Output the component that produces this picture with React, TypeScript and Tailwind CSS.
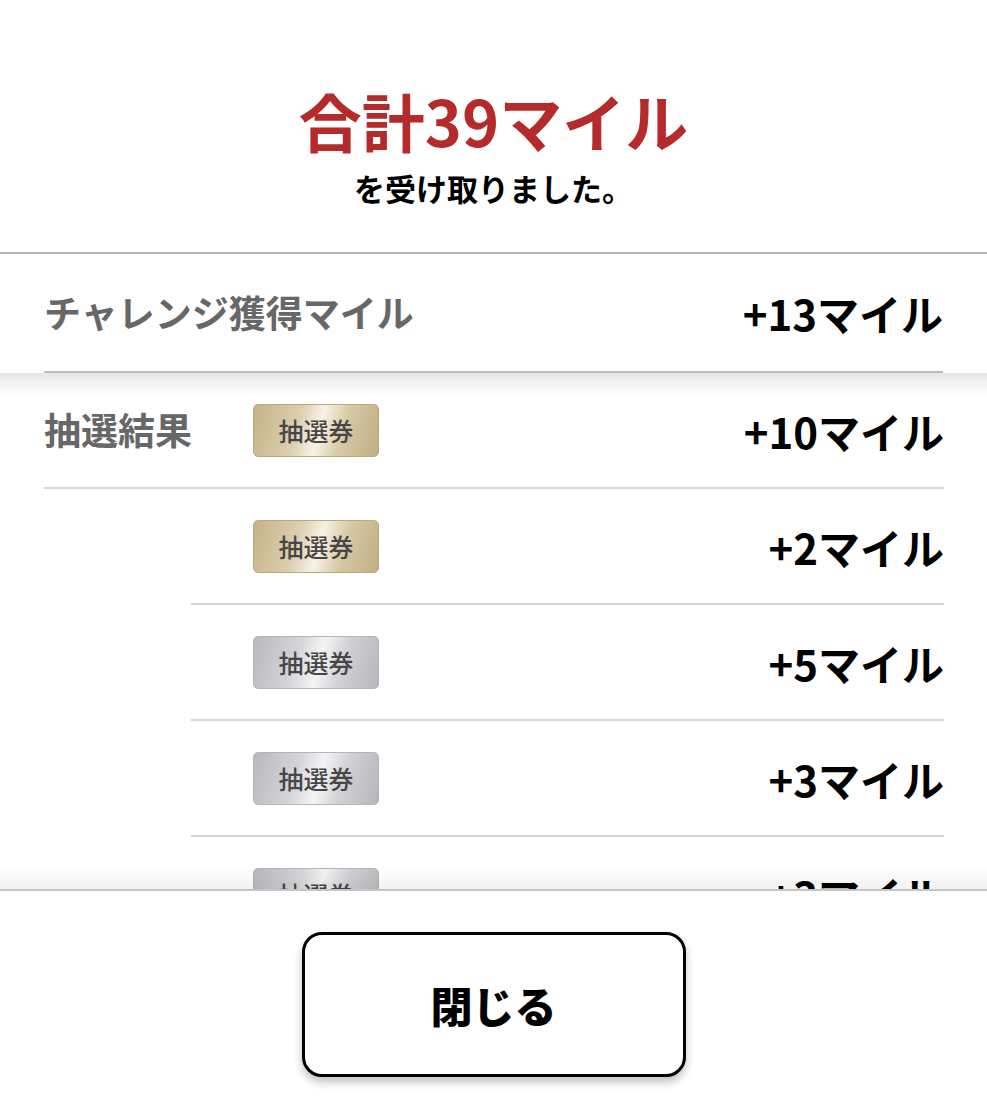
import React from "react";

const font = "font-['Noto_Sans_CJK_JP','Noto_Sans',sans-serif]";

type Item = { label?: string; tier: "gold" | "silver"; miles: number };

const items: Item[] = [
  { label: "抽選結果", tier: "gold", miles: 10 },
  { tier: "gold", miles: 2 },
  { tier: "silver", miles: 5 },
  { tier: "silver", miles: 3 },
  { tier: "silver", miles: 3 },
];

const Ticket = ({ tier }: { tier: "gold" | "silver" }) => (
  <div
    className={
      tier === "gold"
        ? "w-[126px] h-[53px] rounded-[5px] border border-[#bba97c] flex items-center justify-center bg-[linear-gradient(105deg,#c5b387_0%,#dccfb0_35%,#f7f2e6_52%,#d8caa6_70%,#c1ae82_100%)]"
        : "w-[126px] h-[53px] rounded-[5px] border border-[#b4b4b9] flex items-center justify-center bg-[linear-gradient(105deg,#b8b8bd_0%,#d6d6da_35%,#f4f4f6_52%,#d2d2d6_70%,#b6b6bb_100%)]"
    }
  >
    <span className="text-[25px] font-medium text-[#464646] leading-none">抽選券</span>
  </div>
);

export default function App() {
  return (
    <div className={`w-[987px] h-[1105px] bg-white flex flex-col ${font}`}>
      <header className="h-[252px] flex flex-col items-center pt-[88px]">
        <h1 className="text-[63px] font-bold text-[#b52b2b] leading-none">合計39マイル</h1>
        <p className="mt-[21px] text-[31px] font-bold text-black leading-none">を受け取りました。</p>
      </header>
      <div className="h-[2px] bg-[#b4b4b4]" />

      <div className="h-[117px] px-[44px] flex items-center justify-between">
        <span className="text-[37px] font-bold text-[#676767]">チャレンジ獲得マイル</span>
        <span className="text-[42px] font-bold text-black">+13マイル</span>
      </div>
      <div className="mx-[44px] h-[2px] bg-[#bcbcbc]" />

      <div className="relative h-[516px] overflow-hidden">
        <div className="absolute top-0 left-0 right-0 h-[22px] bg-gradient-to-b from-black/10 to-transparent pointer-events-none" />
        {items.map((it, i) => (
          <div key={i}>
            <div className="h-[114px] pl-[44px] pr-[43px] flex items-center">
              <span className="w-[209px] text-[37px] font-bold text-[#676767]">{it.label ?? ""}</span>
              <Ticket tier={it.tier} />
              <span className="ml-auto text-[42px] font-bold text-black">+{it.miles}マイル</span>
            </div>
            <div className={`h-[2px] bg-[#d6d6d6] mr-[43px] ${i === 0 ? "ml-[44px]" : "ml-[191px]"}`} />
          </div>
        ))}
        <div className="absolute bottom-0 left-0 right-0 h-[24px] bg-gradient-to-t from-black/5 to-transparent pointer-events-none" />
      </div>
      <div className="h-[2px] bg-[#c6c6c6]" />

      <footer className="flex justify-center pt-[41px]">
        <button className="w-[384px] h-[145px] rounded-[20px] border-[3px] border-black bg-white shadow-[0_5px_8px_rgba(0,0,0,0.25)] flex items-center justify-center">
          <span className="text-[42px] font-black text-black">閉じる</span>
        </button>
      </footer>
    </div>
  );
}
